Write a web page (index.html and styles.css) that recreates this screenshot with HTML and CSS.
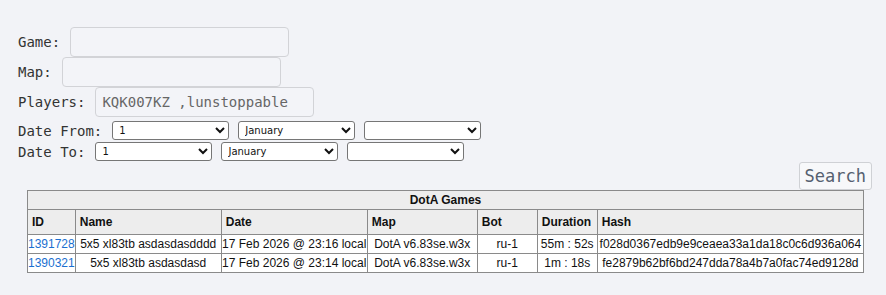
FILE: index.html
```html
<!DOCTYPE html>
<html>
<head>
  <title>DotA Games</title>
  <link rel="stylesheet" href="styles.css">
</head>
<body>
  <div class="container">
    <form class="search-form">
      <div class="field">
        <label for="game">Game:</label>
        <input type="text" id="game">
      </div>
      <div class="field">
        <label for="map">Map:</label>
        <input type="text" id="map">
      </div>
      <div class="field">
        <label for="players">Players:</label>
        <input type="text" id="players" value="KQK007KZ ,lunstoppable">
      </div>
      <div class="date-row">
        <label>Date From:</label>
        <select><option>1</option></select>
        <select><option>January</option></select>
        <select><option></option></select>
      </div>
      <div class="date-row">
        <label>Date To:</label>
        <select><option>1</option></select>
        <select><option>January</option></select>
        <select><option></option></select>
      </div>
      <div class="search-row">
        <button type="button" class="search-button">Search</button>
      </div>
    </form>

    <table class="games">
      <tr>
        <th colspan="7" class="title">DotA Games</th>
      </tr>
      <tr class="cols">
        <th class="c-id">ID</th>
        <th class="c-name">Name</th>
        <th class="c-date">Date</th>
        <th class="c-map">Map</th>
        <th class="c-bot">Bot</th>
        <th class="c-dur">Duration</th>
        <th class="c-hash">Hash</th>
      </tr>
      <tr>
        <td><a href="#">1391728</a></td>
        <td>5x5 xl83tb asdasdasdddd</td>
        <td>17 Feb 2026 @ 23:16 local</td>
        <td>DotA v6.83se.w3x</td>
        <td>ru-1</td>
        <td>55m : 52s</td>
        <td>f028d0367edb9e9ceaea33a1da18c0c6d936a064</td>
      </tr>
      <tr>
        <td><a href="#">1390321</a></td>
        <td>5x5 xl83tb asdasdasd</td>
        <td>17 Feb 2026 @ 23:14 local</td>
        <td>DotA v6.83se.w3x</td>
        <td>ru-1</td>
        <td>1m : 18s</td>
        <td>fe2879b62bf6bd247dda78a4b7a0fac74ed9128d</td>
      </tr>
    </table>
  </div>
</body>
</html>
```

FILE: styles.css
```css
body {
  margin: 0;
  background-color: #f2f3f7;
  font-family: "DejaVu Sans Mono", monospace;
  color: #333;
}

.container {
  padding: 27px 14px 0 18px;
}

.search-form {
  margin: 0;
}

.field {
  display: flex;
  align-items: center;
  gap: 10px;
  font-size: 14px;
}

.field input {
  width: 219px;
  height: 30px;
  box-sizing: border-box;
  padding: 0 6px;
  border: 1px solid #d2d3d7;
  border-radius: 4px;
  background-color: #f3f4f8;
  font-family: "DejaVu Sans Mono", monospace;
  font-size: 14px;
  color: #666;
}

.field:nth-child(3) {
  margin-bottom: 3px;
}

.date-row {
  display: flex;
  align-items: center;
  gap: 9px;
  height: 21px;
  font-size: 14px;
}

.date-row label {
  margin-right: 1px;
}

.date-row select {
  width: 117px;
  height: 19px;
  padding: 0 2px;
  border: 1px solid #767676;
  border-radius: 3px;
  background-color: white;
  font-family: "DejaVu Sans", sans-serif;
  font-size: 10px;
  color: #111;
}

.search-row {
  display: flex;
  justify-content: flex-end;
}

.search-button {
  height: 28px;
  padding: 0 5px;
  border: 1px solid #cfd1d5;
  border-radius: 3px;
  background-color: #f7f8fa;
  font-family: "DejaVu Sans Mono", monospace;
  font-size: 17px;
  color: #556070;
}

.games {
  width: 837px;
  margin-left: 9px;
  border-collapse: collapse;
  font-family: "Liberation Sans", Arial, sans-serif;
  font-size: 12px;
  color: #111;
  background-color: white;
}

.games th,
.games td {
  border: 1px solid #8a8a8a;
}

.games th {
  background-color: #ededed;
  font-weight: bold;
  text-align: left;
  padding: 5px 4px;
}

.games th.title {
  text-align: center;
  padding: 2px 4px;
}

.games td {
  text-align: center;
  padding: 2px 0;
  white-space: nowrap;
}

.games a {
  color: #1a6fd0;
  text-decoration: none;
}

.c-id { width: 37px; }
.c-name { width: 137px; }
.c-date { width: 137px; }
.c-map { width: 101px; }
.c-bot { width: 51px; }
.c-dur { width: 51px; }
```
